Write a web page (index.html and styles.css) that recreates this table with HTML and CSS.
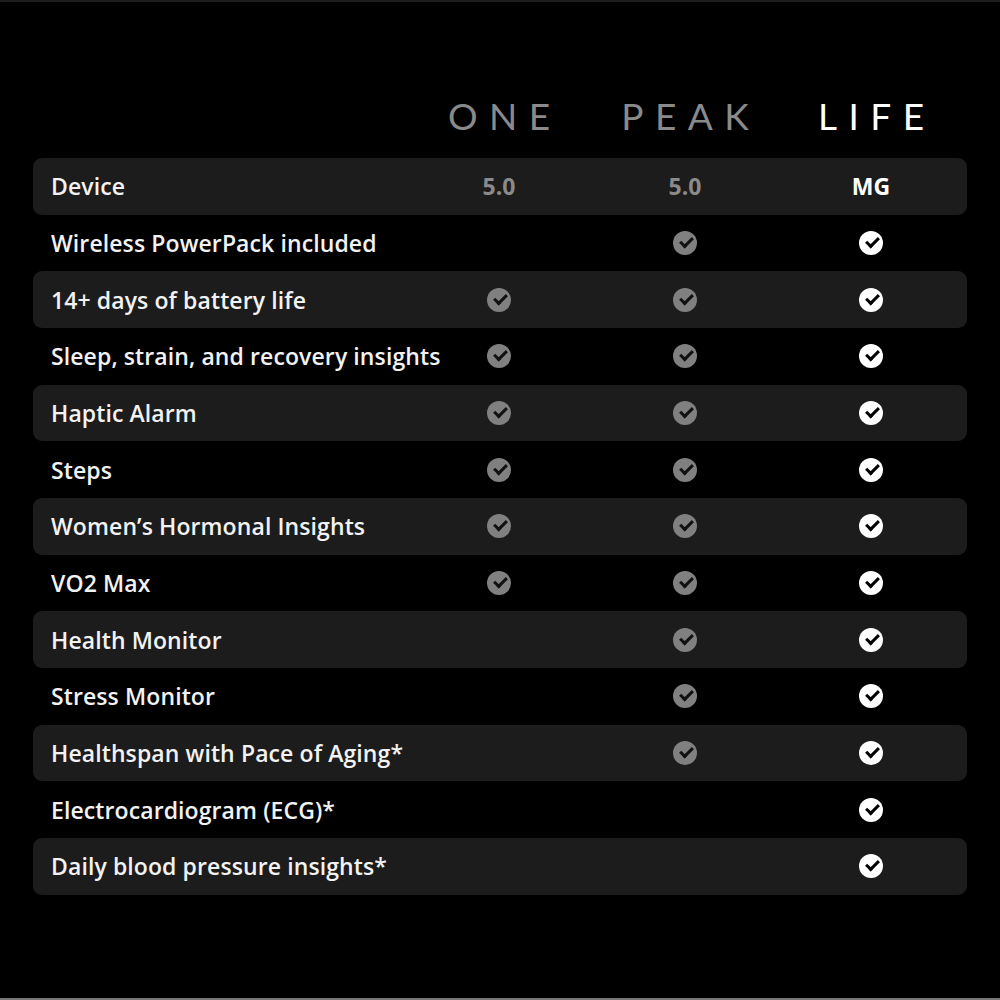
FILE: index.html
```html
<!DOCTYPE html>
<html>
<head>
<meta charset="utf-8">
<link rel="stylesheet" href="styles.css">
</head>
<body>
<div class="page">
  <div class="head">
    <div></div>
    <div class="tier dim">ONE</div>
    <div class="tier dim">PEAK</div>
    <div class="tier">LIFE</div>
  </div>
  <div class="table">
    <div class="row alt device"><div class="label">Device</div><div class="cell dim">5.0</div><div class="cell dim">5.0</div><div class="cell">MG</div></div>
    <div class="row"><div class="label">Wireless PowerPack included</div><div class="cell"></div><div class="cell"><span class="chk g"></span></div><div class="cell"><span class="chk w"></span></div></div>
    <div class="row alt"><div class="label">14+ days of battery life</div><div class="cell"><span class="chk g"></span></div><div class="cell"><span class="chk g"></span></div><div class="cell"><span class="chk w"></span></div></div>
    <div class="row"><div class="label">Sleep, strain, and recovery insights</div><div class="cell"><span class="chk g"></span></div><div class="cell"><span class="chk g"></span></div><div class="cell"><span class="chk w"></span></div></div>
    <div class="row alt"><div class="label">Haptic Alarm</div><div class="cell"><span class="chk g"></span></div><div class="cell"><span class="chk g"></span></div><div class="cell"><span class="chk w"></span></div></div>
    <div class="row"><div class="label">Steps</div><div class="cell"><span class="chk g"></span></div><div class="cell"><span class="chk g"></span></div><div class="cell"><span class="chk w"></span></div></div>
    <div class="row alt"><div class="label">Women’s Hormonal Insights</div><div class="cell"><span class="chk g"></span></div><div class="cell"><span class="chk g"></span></div><div class="cell"><span class="chk w"></span></div></div>
    <div class="row"><div class="label">VO2 Max</div><div class="cell"><span class="chk g"></span></div><div class="cell"><span class="chk g"></span></div><div class="cell"><span class="chk w"></span></div></div>
    <div class="row alt"><div class="label">Health Monitor</div><div class="cell"></div><div class="cell"><span class="chk g"></span></div><div class="cell"><span class="chk w"></span></div></div>
    <div class="row"><div class="label">Stress Monitor</div><div class="cell"></div><div class="cell"><span class="chk g"></span></div><div class="cell"><span class="chk w"></span></div></div>
    <div class="row alt"><div class="label">Healthspan with Pace of Aging*</div><div class="cell"></div><div class="cell"><span class="chk g"></span></div><div class="cell"><span class="chk w"></span></div></div>
    <div class="row"><div class="label">Electrocardiogram (ECG)*</div><div class="cell"></div><div class="cell"></div><div class="cell"><span class="chk w"></span></div></div>
    <div class="row alt"><div class="label">Daily blood pressure insights*</div><div class="cell"></div><div class="cell"></div><div class="cell"><span class="chk w"></span></div></div>
  </div>
</div>
</body>
</html>
```
FILE: styles.css
```css
html, body {
  margin: 0;
  padding: 0;
  background: #000;
}
body {
  width: 1000px;
  height: 1000px;
  box-sizing: border-box;
  border-top: 2px solid #1e1e1e;
  border-bottom: 2px solid #777;
  font-family: "Open Sans", "Liberation Sans", sans-serif;
  color: #fff;
  overflow: hidden;
}
.page {
  padding: 0 33px;
}
.head {
  display: grid;
  grid-template-columns: minmax(0, 1fr) 186px 186px 186px;
  padding-right: 3px;
  height: 156px;
  align-items: end;
}
.tier {
  text-align: center;
  font-family: "Lato", sans-serif;
  font-weight: 400;
  font-size: 37px;
  letter-spacing: 0.31em;
  text-indent: 0.31em;
  line-height: 1;
  padding-bottom: 24px;
  color: #fff;
}
.tier.dim { color: #8a8a8a; }
.table {
  display: flex;
  flex-direction: column;
}
.row {
  display: grid;
  grid-template-columns: minmax(0, 1fr) 186px 186px 186px;
  padding-right: 3px;
  height: 56.67px;
  align-items: center;
  border-radius: 9px;
}
.row.alt { background: #1c1c1c; }
.label {
  padding-left: 18px;
  font-size: 23px;
  font-weight: 600;
  letter-spacing: 0.1px;
  color: #f2f2f2;
  white-space: nowrap;
}
.cell {
  display: flex;
  justify-content: center;
  align-items: center;
  font-size: 23px;
  font-weight: 700;
}
.cell.dim { color: #8a8a8a; }
.chk {
  position: relative;
  width: 24px;
  height: 24px;
  border-radius: 50%;
  display: block;
}
.chk.g { background: #808080; }
.chk.w { background: #fff; }
.chk::after {
  content: "";
  position: absolute;
  left: 7px;
  top: 6px;
  width: 10px;
  height: 5px;
  border-left: 3px solid #111;
  border-bottom: 3px solid #111;
  transform: rotate(-45deg);
}
.chk.w::after { border-color: #000; }
```
